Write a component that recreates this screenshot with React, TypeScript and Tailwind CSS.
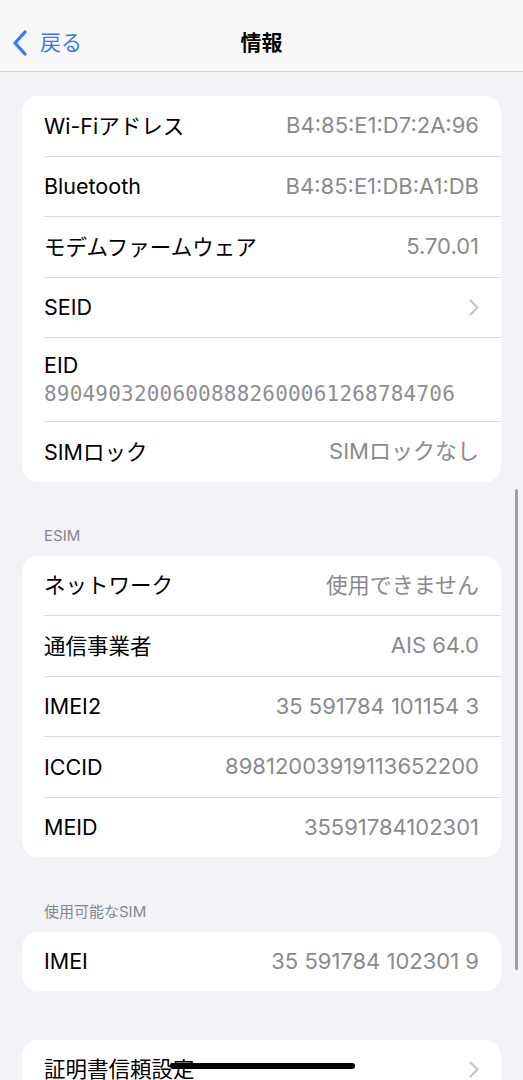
const font = { fontFamily: '"Inter", "Noto Sans CJK JP", sans-serif' };

type Row = { label: string; value?: string; chevron?: boolean; mono?: boolean };

const Chevron = () => (
  <svg width="10" height="17" viewBox="0 0 10 17" fill="none">
    <path d="M1.5 1.5l7 7-7 7" stroke="#c4c4c7" strokeWidth="2" strokeLinecap="round" strokeLinejoin="round" />
  </svg>
);

const Card = ({ rows }: { rows: Row[] }) => (
  <div className="mx-[22px] overflow-hidden rounded-[16px] bg-white">
    {rows.map((row, i) => (
      <div key={row.label} className="pl-[22px]">
        {row.mono ? (
          <div className="flex h-[83px] flex-col justify-center pr-[22px]">
            <span className="text-[21.5px] leading-[28px] text-black">{row.label}</span>
            <span
              className="text-[21px] leading-[30px] tracking-[0.2px] text-[#8e8e92]"
              style={{ fontFamily: '"DejaVu Sans Mono", monospace' }}
            >
              {row.value}
            </span>
          </div>
        ) : (
          <div className="flex h-[59.5px] items-center justify-between pr-[22px]">
            <span className="text-[21.5px] text-black">{row.label}</span>
            {row.chevron ? <Chevron /> : <span className="text-[22px] text-[#8a8a8e]">{row.value}</span>}
          </div>
        )}
        {i < rows.length - 1 && <div className="h-px bg-[#dcdce0]" />}
      </div>
    ))}
  </div>
);

const SectionLabel = ({ text }: { text: string }) => (
  <div className="px-[44px] pb-[10px] text-[15px] leading-[20px] text-[#86868b]">{text}</div>
);

export default function App() {
  return (
    <div className="relative h-[1080px] w-[523px] overflow-hidden bg-[#f2f2f7]" style={font}>
      <header className="relative flex h-[72px] items-center border-b border-[#d8d8dc] bg-[#f8f8f8] pt-[14px]">
        <div className="flex items-center pl-[12px] text-[#3478f6]">
          <svg width="16" height="26" viewBox="0 0 16 26" fill="none">
            <path d="M13 2L3 13l10 11" stroke="#3478f6" strokeWidth="3.2" strokeLinecap="round" strokeLinejoin="round" />
          </svg>
          <span className="ml-[12px] text-[21px]">戻る</span>
        </div>
        <h1 className="absolute left-1/2 -translate-x-1/2 text-[21px] font-bold text-black">情報</h1>
      </header>

      <div className="pt-[24px]">
        <Card
          rows={[
            { label: 'Wi-Fiアドレス', value: 'B4:85:E1:D7:2A:96' },
            { label: 'Bluetooth', value: 'B4:85:E1:DB:A1:DB' },
            { label: 'モデムファームウェア', value: '5.70.01' },
            { label: 'SEID', chevron: true },
            { label: 'EID', value: '89049032006008882600061268784706', mono: true },
            { label: 'SIMロック', value: 'SIMロックなし' },
          ]}
        />

        <div className="h-[44px]" />
        <SectionLabel text="ESIM" />
        <Card
          rows={[
            { label: 'ネットワーク', value: '使用できません' },
            { label: '通信事業者', value: 'AIS 64.0' },
            { label: 'IMEI2', value: '35 591784 101154 3' },
            { label: 'ICCID', value: '89812003919113652200' },
            { label: 'MEID', value: '35591784102301' },
          ]}
        />

        <div className="h-[44.5px]" />
        <SectionLabel text="使用可能なSIM" />
        <Card rows={[{ label: 'IMEI', value: '35 591784 102301 9' }]} />

        <div className="h-[48.5px]" />
        <Card rows={[{ label: '証明書信頼設定', chevron: true }]} />
      </div>

      <div className="absolute right-[5px] top-[489px] h-[481px] w-[3px] rounded-full bg-[#a0a0a4]" />
      <div className="absolute left-[170px] top-[1063px] h-[6px] w-[185px] rounded-full bg-black" />
    </div>
  );
}
